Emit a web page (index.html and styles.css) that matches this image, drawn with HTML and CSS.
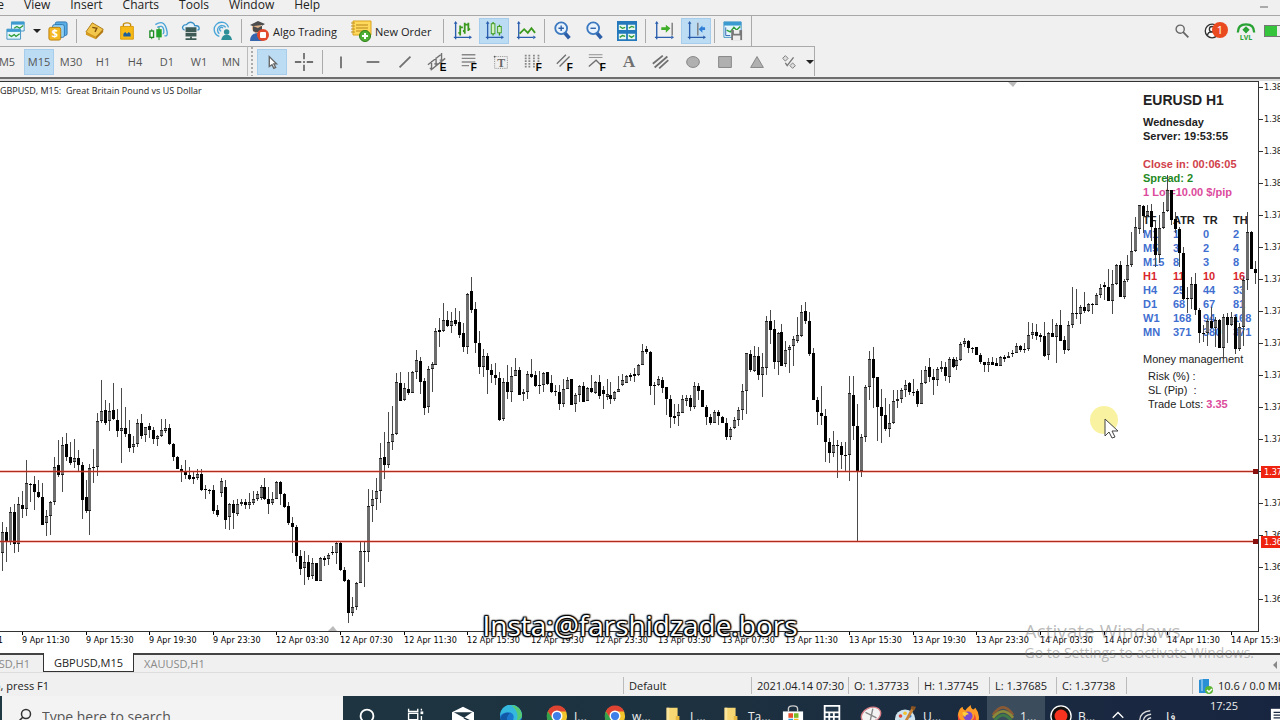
FILE: index.html
```html
<!DOCTYPE html>
<html lang="en">
  <head>
    <meta charset="utf-8">
    <title>GBPUSD,M15</title>
    <link rel="stylesheet" href="styles.css">
  </head>
  <body>
    <nav class="menu">
      <button>File</button>
      <button>View</button>
      <button>Insert</button>
      <button>Charts</button>
      <button>Tools</button>
      <button>Window</button>
      <button>Help</button>
      <button class="minimize" aria-label="Minimize"></button>
    </nav>

    <div class="toolbar">
      <div class="tools tools-main">
        <button class="tool" aria-label="New chart">
          <svg viewBox="0 0 22 22"><path d="M6 1h14v10H6z" fill="#e6f6fd" stroke="#3b8fc0"/><path d="M6 1h14v3H6z" fill="#3b9bd0"/><path d="M9 8l3-2 3 2 4-3" fill="none" stroke="#2f9d3a" stroke-width="1.5"/><path d="M1 9h15v11H1z" fill="#e6f6fd" stroke="#3b8fc0"/><path d="M1 9h15v3H1z" fill="#3b9bd0"/><path d="M3 15l3 2 3-2 2 2 4-3" fill="none" stroke="#2f9d3a" stroke-width="1.5"/></svg>
        </button>
        <i class="caret"></i>
        <button class="tool" aria-label="Market watch">
          <svg viewBox="0 0 22 22"><rect x="8" y="1" width="13" height="15" rx="2" fill="#5aaee6" stroke="#2a72ad"/><rect x="5" y="4" width="13" height="14" rx="2" fill="#8fd0f5" stroke="#2a72ad"/><rect x="1" y="7" width="13" height="14" rx="2" fill="#f4b824" stroke="#b87c08"/><text x="4" y="18" font-size="12" font-weight="bold" fill="#fff">$</text></svg>
        </button>
        <i class="sep"></i>
        <button class="tool" aria-label="Navigator">
          <svg viewBox="0 0 22 22"><path d="M1 12L8 2l12 7-8 10z" fill="#f3c64c" stroke="#a9760f"/><path d="M1 12l11 5v3L1 15z" fill="#d49a1f"/><path d="M12 17l8-8v3l-8 8z" fill="#b57b12"/><path d="M8 7l5 1-2 4" fill="none" stroke="#7d5208" stroke-width="1.5"/></svg>
        </button>
        <button class="tool" aria-label="Market">
          <svg viewBox="0 0 22 22"><path d="M7 7V4q0-2 4-2t4 2v3" fill="none" stroke="#c28b09" stroke-width="1.5"/><path d="M4 6h14v14H4z" fill="#f7b916" stroke="#d79a0a"/><path d="M7 17v-3l2-2 2 2 2-2 2 2v3z" fill="#1d5f9c"/></svg>
        </button>
        <button class="tool" aria-label="Signals">
          <svg viewBox="0 0 22 22"><path d="M3 9v11M11 6v15" stroke="#1e8a24"/><rect x="1" y="11" width="4" height="7" fill="#fff" stroke="#1e8a24" stroke-width="1.5"/><rect x="8" y="9" width="6" height="9" fill="#24a32c"/><path d="M7 4q9-6 12 4t-2 8M9 7q6-3 7 2t-1 5" fill="none" stroke="#4aa5d8" stroke-width="1.5"/></svg>
        </button>
        <button class="tool" aria-label="Virtual hosting">
          <svg viewBox="0 0 22 22"><path d="M4 10q-3-1-2-4 1-2 4-2 3-4 7-2 2 1 2 3 5 0 5 3 0 2-2 2" fill="#e3f3fb" stroke="#3a8fc4" stroke-width="1.5"/><path d="M5 7h12v5H5zM5 13h12v4H5z" fill="#3d5a55"/><path d="M11 17v3M5 20h12" stroke="#3d5a55" stroke-width="2"/></svg>
        </button>
        <button class="tool" aria-label="Community">
          <svg viewBox="0 0 22 22"><path d="M7 17A8 8 0 1 1 17 7M7 14a5 5 0 1 1 7-7M9 11a2 2 0 1 1 2-3" fill="none" stroke="#4aa5d8" stroke-width="1.5"/><circle cx="15" cy="12" r="3" fill="#2d8f97"/><path d="M9 21q1-6 6-6t6 6z" fill="#2d8f97"/></svg>
        </button>
        <i class="sep"></i>
        <button class="tool tool-text tool-algo">
          <svg viewBox="0 0 22 22"><circle cx="9" cy="8" r="5" fill="#e0b088"/><path d="M2 5l8-4 7 3-7 4zM5 6v5q4 3 9-1V5" fill="#4c4c4c"/><path d="M2 21q0-8 8-8l5 8z" fill="#3565ad"/><circle cx="15" cy="15" r="6" fill="#e2492c"/><rect x="12" y="12" width="6" height="6" rx="1" fill="#fff"/></svg>
          Algo Trading
        </button>
        <button class="tool tool-text tool-order">
          <svg viewBox="0 0 22 22"><path d="M3 1h18v14H3z" fill="#ffd95c" stroke="#d9a31c"/><path d="M6 5h12M6 8h12M6 11h12" stroke="#b8851a"/><path d="M1 3h4M1 6h4M1 9h4M1 12h4" stroke="#c2921f"/><circle cx="15" cy="16" r="5.500" fill="#4fae34" stroke="#2e8119"/><path d="M15 13v6M12 16h6" stroke="#fff" stroke-width="2"/></svg>
          New Order
        </button>
        <i class="sep"></i>
        <button class="tool" aria-label="Bar chart">
          <svg viewBox="0 0 22 22"><path d="M4 2v18M2 18h18" stroke="#2b5fae" stroke-width="1.500"/><path d="M4 0l2 3H2zM22 18l-3-2v4z" fill="#2b5fae"/><path d="M9 5v11M7 13h2M9 7h3M14 2v12M12 11h2M14 4h3M18 2v9M18 9h2" stroke="#3c9a1f" stroke-width="2"/></svg>
        </button>
        <button class="tool active" aria-label="Candlesticks">
          <svg viewBox="0 0 22 22"><path d="M4 2v18M2 18h18" stroke="#2b5fae" stroke-width="1.500"/><path d="M4 0l2 3H2zM22 18l-3-2v4z" fill="#2b5fae"/><path d="M10 1v15M17 4v12" stroke="#3c9a1f" stroke-width="1.500"/><rect x="8" y="3" width="4" height="11" fill="#d3f2c4" stroke="#3c9a1f"/><rect x="15" y="6" width="4" height="7" fill="#d3f2c4" stroke="#3c9a1f"/></svg>
        </button>
        <button class="tool" aria-label="Line chart">
          <svg viewBox="0 0 22 22"><path d="M3 2v18M1 18h18" stroke="#2b5fae" stroke-width="1.500"/><path d="M3 0l2 3H1zM22 18l-3-2v4z" fill="#2b5fae"/><path d="M4 14l5-5 4 4 4-5 4 5" fill="none" stroke="#3c9a1f" stroke-width="2"/></svg>
        </button>
        <i class="sep"></i>
        <button class="tool" aria-label="Zoom in">
          <svg viewBox="0 0 22 22"><path d="M12 12l6 7" stroke="#2d5fa8" stroke-width="4"/><circle cx="9" cy="8" r="6.500" fill="#e8f3fd" stroke="#3b78bf" stroke-width="2"/><path d="M9 5v6M6 8h6" stroke="#2d5fa8" stroke-width="1.500"/></svg>
        </button>
        <button class="tool" aria-label="Zoom out">
          <svg viewBox="0 0 22 22"><path d="M12 12l6 7" stroke="#2d5fa8" stroke-width="4"/><circle cx="9" cy="8" r="6.500" fill="#e8f3fd" stroke="#3b78bf" stroke-width="2"/><path d="M6 8h6" stroke="#2d5fa8" stroke-width="1.500"/></svg>
        </button>
        <button class="tool" aria-label="Tile windows">
          <svg viewBox="0 0 22 22"><rect x="0" y="0" width="22" height="22" fill="#2479bd"/><path d="M2 4h8v6H2zM12 4h8v6h-8zM2 14h8v6H2zM12 14h8v6h-8z" fill="#e8f8ef"/><path d="M3 6l3 2 3-1M13 8l3-2 3 1M3 18l3-2 3 1M13 16l3 2 3-2" fill="none" stroke="#2f9d3a" stroke-width="1.500"/></svg>
        </button>
        <i class="sep"></i>
        <button class="tool" aria-label="Auto scroll">
          <svg viewBox="0 0 22 22"><path d="M3 2v18M1 18h18" stroke="#2b5fae" stroke-width="1.500"/><path d="M3 0l2 3H1zM22 18l-3-2v4z" fill="#2b5fae"/><path d="M20 2v14" stroke="#777" stroke-width="1.500"/><path d="M8 7h5V4l5 4-5 5v-3H8z" fill="#3fae2a"/></svg>
        </button>
        <button class="tool active" aria-label="Chart shift">
          <svg viewBox="0 0 22 22"><path d="M4 2v18M2 18h18" stroke="#2b5fae" stroke-width="1.500"/><path d="M4 0l2 3H2zM22 18l-3-2v4z" fill="#2b5fae"/><path d="M13 2v14" stroke="#777" stroke-width="1.500"/><path d="M21 7h-3V5l-4 4 4 4v-3h3z" fill="#2f7fd6"/></svg>
        </button>
        <i class="sep"></i>
        <button class="tool" aria-label="Templates">
          <svg viewBox="0 0 22 22"><path d="M1 1h19v17H1z" fill="#e6f6fd" stroke="#3b8fc0"/><path d="M1 1h19v4H1z" fill="#3b9bd0"/><path d="M3 7v9h5" stroke="#2b5fae" fill="none"/><path d="M4 10l4 2 4-5 3 3 4-4" fill="none" stroke="#2f9d3a" stroke-width="1.500"/><path d="M9 10h12v11H9z" fill="#777"/><path d="M12 10h6v4h-6zM11 16h8v5h-8z" fill="#eee"/></svg>
        </button>
      </div>
      <div class="account">
        <button class="tool" aria-label="Search">
          <svg viewBox="0 0 22 22"><circle cx="9" cy="9" r="4.500" fill="none" stroke="#666" stroke-width="1.500"/><path d="M12 12l6 6" stroke="#666" stroke-width="2"/></svg>
        </button>
        <button class="tool profile" aria-label="Account">
          <svg viewBox="0 0 22 22"><circle cx="10" cy="11" r="7.500" fill="#fff" stroke="#333" stroke-width="1.500"/><circle cx="10" cy="9" r="3" fill="none" stroke="#333" stroke-width="1.500"/><path d="M5 16q0-4 5-4t5 4" fill="none" stroke="#333" stroke-width="1.500"/></svg>
          <span class="badge">1</span>
        </button>
        <button class="tool level" aria-label="Level">
          <svg viewBox="0 0 22 12"><path d="M2 11Q2 2 11 2t9 9" fill="none" stroke="#2aa335" stroke-width="2.500"/><path d="M11 4l4 4-4 4-4-4z" fill="#2aa335"/></svg>
          <span>LVL</span>
        </button>
        <i class="battery"></i>
      </div>
    </div>

    <div class="toolbar toolbar-draw">
      <div class="tools periods">
        <button class="tool">M5</button>
        <button class="tool active">M15</button>
        <button class="tool">M30</button>
        <button class="tool">H1</button>
        <button class="tool">H4</button>
        <button class="tool">D1</button>
        <button class="tool">W1</button>
        <button class="tool">MN</button>
      </div>
      <i class="grip"></i>
      <div class="tools tools-draw">
        <button class="tool active" aria-label="Cursor">
          <svg viewBox="0 0 22 22"><path d="M8 5v11l3-2 2 4 2-1-2-4h3z" fill="#fff" stroke="#666" stroke-width="1.500"/></svg>
        </button>
        <button class="tool" aria-label="Crosshair">
          <svg viewBox="0 0 22 22"><path d="M11 1v7M11 14v7M1 11h7M14 11h7M11 10v2" stroke="#707070" stroke-width="2"/></svg>
        </button>
        <i class="sep"></i>
        <button class="tool" aria-label="Vertical line">
          <svg viewBox="0 0 22 22"><path d="M11 5v13" stroke="#707070" stroke-width="2"/></svg>
        </button>
        <button class="tool" aria-label="Horizontal line">
          <svg viewBox="0 0 22 22"><path d="M4 11h14" stroke="#707070" stroke-width="2"/></svg>
        </button>
        <button class="tool" aria-label="Trend line">
          <svg viewBox="0 0 22 22"><path d="M5 17L17 5" stroke="#707070" stroke-width="2"/></svg>
        </button>
        <button class="tool" aria-label="Equidistant channel">
          <svg viewBox="0 0 22 22"><path d="M1 14L15 3M4 20L20 7M5 10v9M3 18h2M10 6v10M8 13h4M16 1v11M14 9h4" stroke="#707070" stroke-width="1.500"/><text x="14" y="21" font-size="11" font-weight="bold">E</text></svg>
        </button>
        <button class="tool" aria-label="Fibonacci retracement">
          <svg viewBox="0 0 22 22"><path d="M3 3h15M3 7h15M3 11h15M3 15h8" stroke="#888" stroke-width="1.500"/><text x="13" y="21" font-size="11" font-weight="bold">F</text></svg>
        </button>
        <button class="tool" aria-label="Text label">
          <svg viewBox="0 0 22 22"><path d="M4 5h14v13H4z" fill="none" stroke="#888" stroke-dasharray="1 1"/><circle cx="4" cy="5" r="1" fill="#555"/><text class="serif" x="7" y="16" font-size="13" font-weight="bold" fill="#666">T</text></svg>
        </button>
        <button class="tool" aria-label="Fibonacci time zones">
          <svg viewBox="0 0 22 22"><path d="M3 3v14M7 3v14M12 3v14M17 3v8" stroke="#888" stroke-width="2" stroke-dasharray="2 1"/><text x="14" y="21" font-size="11" font-weight="bold">F</text></svg>
        </button>
        <button class="tool" aria-label="Fibonacci channel">
          <svg viewBox="0 0 22 22"><path d="M2 13L12 3M5 16L16 5" stroke="#707070" stroke-width="1.500"/><text x="13" y="21" font-size="11" font-weight="bold">F</text></svg>
        </button>
        <button class="tool" aria-label="Fibonacci expansion">
          <svg viewBox="0 0 22 22"><path d="M2 3h15M2 6h15" stroke="#888"/><path d="M2 16l8-7 6 6" fill="none" stroke="#707070" stroke-width="1.500"/><text x="14" y="21" font-size="11" font-weight="bold">F</text></svg>
        </button>
        <button class="tool" aria-label="Text">
          <svg viewBox="0 0 22 22"><text class="serif" x="4" y="17" font-size="19" font-weight="bold" fill="#707070">A</text></svg>
        </button>
        <button class="tool" aria-label="Parallel lines">
          <svg viewBox="0 0 22 22"><path d="M2 13L13 4M4 17L18 5M9 18l10-9" stroke="#707070" stroke-width="2"/></svg>
        </button>
        <button class="tool" aria-label="Ellipse">
          <svg viewBox="0 0 22 22"><ellipse cx="11" cy="11" rx="7" ry="6" fill="#b0b0b0" stroke="#808080"/></svg>
        </button>
        <button class="tool" aria-label="Rectangle">
          <svg viewBox="0 0 22 22"><path d="M4 5h14v12H4z" fill="#b0b0b0" stroke="#808080"/></svg>
        </button>
        <button class="tool" aria-label="Triangle">
          <svg viewBox="0 0 22 22"><path d="M11 5l7 12H4z" fill="#b0b0b0" stroke="#808080"/></svg>
        </button>
        <button class="tool" aria-label="Arrows">
          <svg viewBox="0 0 22 22"><path d="M7 4l3 3-3 3-3-3zM15 12l3 3-3 3-3-3z" fill="#ddd" stroke="#777"/><path d="M7 12l2 3 7-9" fill="none" stroke="#777" stroke-width="1.500"/></svg>
        </button>
        <i class="caret"></i>
      </div>
    </div>

    <main class="chart">
      <div class="plot">
        <p class="symbol">GBPUSD, M15:&nbsp; Great Britain Pound vs US Dollar</p>

        <section class="info">
          <h1>EURUSD H1</h1>
          <p>Wednesday<br>Server: 19:53:55</p>
          <p><span class="red">Close in: 00:06:05</span><br><span class="green">Spread: 2</span><br><span class="pink">1 Lot=10.00 $/pip</span></p>
          <table>
            <tr><th>TF</th><th>ATR</th><th>TR</th><th>TH</th></tr>
            <tr><td>M1</td><td>1</td><td>0</td><td>2</td></tr>
            <tr><td>M5</td><td>3</td><td>2</td><td>4</td></tr>
            <tr><td>M15</td><td>8</td><td>3</td><td>8</td></tr>
            <tr class="current"><td>H1</td><td>11</td><td>10</td><td>16</td></tr>
            <tr><td>H4</td><td>25</td><td>44</td><td>33</td></tr>
            <tr><td>D1</td><td>68</td><td>67</td><td>81</td></tr>
            <tr><td>W1</td><td>168</td><td>94</td><td>168</td></tr>
            <tr><td>MN</td><td>371</td><td>380</td><td>371</td></tr>
          </table>
          <div class="money">
            <h2>Money management</h2>
            <p>Risk (%) :<br>SL (Pip) &nbsp;:<br>Trade Lots: <b class="pink">3.35</b></p>
          </div>
        </section>

        <svg id="candles" class="candles"></svg>

        <svg class="pointer" viewBox="0 0 32 36"><circle cx="15" cy="15" r="14" fill="#f7f08a" fill-opacity="0.8"/><path d="M16 14v17l4-4 3 6 3-1-3-6h6z" fill="#fff" stroke="#444"/></svg>
      </div>

      <ol class="prices">
        <li>1.38</li><li>1.38</li><li>1.38</li><li>1.38</li>
        <li>1.37</li><li>1.37</li><li>1.37</li><li>1.37</li><li>1.37</li>
        <li>1.37</li><li>1.37</li><li>1.37</li><li>1.37</li><li>1.37</li>
        <li>1.36</li><li>1.36</li><li>1.36</li>
        <li class="tag tag-upper">1.37</li>
        <li class="tag tag-lower">1.36</li>
      </ol>

      <svg id="times" class="times"></svg>
      <p class="watermark">Insta:@farshidzade.bors</p>
    </main>

    <nav class="tabs">
      <a href="#">EURUSD,H1</a>
      <a href="#" class="selected">GBPUSD,M15</a>
      <a href="#">XAUUSD,H1</a>
      <i class="scroll-left"></i>
    </nav>

    <footer class="status">
      <span class="help">For Help, press F1</span>
      <span>Default</span>
      <span>2021.04.14 07:30</span>
      <span>O: 1.37733</span>
      <span>H: 1.37745</span>
      <span>L: 1.37685</span>
      <span>C: 1.37738</span>
      <span></span>
      <span class="traffic">
        <svg viewBox="0 0 16 16"><path d="M1 2l3-1h7v12l-2 2H1z" fill="#2b8fd6"/><path d="M4 1v12" stroke="#bfe3fa"/><circle cx="11" cy="12" r="4" fill="#5bb535"/><path d="M9 12l2 2 3-3" fill="none" stroke="#fff" stroke-width="1.500"/></svg>
        10.6 / 0.0 Mb
      </span>
    </footer>

    <div class="taskbar">
      <label class="search">
        <svg viewBox="0 0 16 16"><circle cx="10" cy="6" r="4.500" fill="none" stroke="#333" stroke-width="1.500"/><path d="M7 9l-5 5" stroke="#333" stroke-width="1.500"/></svg>
        <input type="text" placeholder="Type here to search" aria-label="Search">
      </label>
      <button class="app wide" aria-label="Cortana"><svg viewBox="0 0 24 24"><circle cx="12" cy="12" r="7" fill="none" stroke="#fff" stroke-width="2"/></svg></button>
      <button class="app wide" aria-label="Task view"><svg viewBox="0 0 24 24"><path d="M5 4v3h10V4M5 9h10v7H5zM5 21v-3h10v3M19 4v2M19 12v9" fill="none" stroke="#fff" stroke-width="1.500"/><path d="M18 7h3v3h-3z" fill="#fff"/></svg></button>
      <button class="app wide" aria-label="Mail"><svg viewBox="0 0 24 24"><path d="M0 8l12-6 12 6v14H0z" fill="#fff"/><path d="M2 8h20l-9 6z" fill="#1e3440"/><path d="M13 14l6 3" fill="none" stroke="#1e3440" stroke-width="1.500"/></svg></button>
      <button class="app wide" aria-label="Edge"><svg viewBox="0 0 24 24"><circle cx="12" cy="12" r="12" fill="#1b78cf"/><path d="M0 12A12 12 0 0 1 24 11q0 6-6 6-5 0-3-3 0-6-6-6-6 0-9 4z" fill="#35b8dd"/><path d="M12 0q11 1 12 11 0 5-6 6 4-9-6-17z" fill="#56ca73"/><path d="M1 13q4-6 10-4-5 3-3 8 1 5 6 6Q2 25 1 13z" fill="#1258a4"/></svg></button>
      <button class="app labelled first"><svg viewBox="0 0 24 24"><use href="#chrome"/></svg>I...</button>
      <button class="app labelled"><svg viewBox="0 0 24 24"><use href="#chrome"/></svg>w...</button>
      <button class="app labelled"><svg viewBox="0 0 24 24"><use href="#folder"/></svg>L...</button>
      <button class="app labelled"><svg viewBox="0 0 24 24"><use href="#folder"/></svg>Ta...</button>
      <button class="app" aria-label="Store"><svg viewBox="0 0 24 24"><path d="M7 7V4q0-3 5-3t5 3v3" fill="none" stroke="#ccc" stroke-width="1.500"/><path d="M1 7h22v16H1z" fill="#fff"/><path d="M7 9h5v5H7z" fill="#e8502d"/><path d="M13 9h5v5h-5z" fill="#7dba28"/><path d="M7 15h5v5H7z" fill="#2b9be0"/><path d="M13 15h5v5h-5z" fill="#f9b91e"/></svg></button>
      <button class="app" aria-label="Calculator"><svg viewBox="0 0 24 24"><path d="M3 0h18v24H3z" fill="#fff"/><path d="M5 2h14v5H5zM5 9h3v3H5zM10 9h3v3h-3zM15 9h4v3h-4zM5 14h3v3H5zM10 14h3v3h-3zM15 14h4v3h-4z" fill="#22384a"/></svg></button>
      <button class="app" aria-label="Snipping tool"><svg viewBox="0 0 24 24"><ellipse cx="12" cy="11" rx="11" ry="8" fill="#f3f3f3" stroke="#d98088" stroke-width="1.500" transform="rotate(-25 12 11)"/><path d="M6 8l12 6M14 4l-3 14" stroke="#888" stroke-width="1.500"/><path d="M3 19q8 3 15-2" fill="none" stroke="#d0303b" stroke-width="3"/></svg></button>
      <button class="app labelled"><svg viewBox="0 0 24 24"><ellipse cx="11" cy="15" rx="11" ry="10" fill="#cfe3ee"/><circle cx="6" cy="12" r="2" fill="#df4b3a"/><circle cx="11" cy="9" r="2" fill="#f2c12e"/><circle cx="5" cy="18" r="2" fill="#3aa655"/><circle cx="16" cy="12" r="2" fill="#3478c9"/><path d="M11 19L20 3" stroke="#c98438" stroke-width="3"/><path d="M18 1l5 1-2 4-4-2z" fill="#8a5423"/></svg>U...</button>
      <button class="app" aria-label="Firefox"><svg viewBox="0 0 24 24"><path d="M1 12q0-7 5-10 0 3 3 4 2-3 6-6 0 4 3 5l2-2q4 5 4 10 0 11-11 11T1 12z" fill="#ff9b26"/><path d="M1 10q2 10 12 8 7-2 6-9 6 15-8 15Q0 22 1 10z" fill="#f0473a"/><circle cx="12" cy="12" r="5" fill="#7c4ad0"/><path d="M6 8q5-1 7 2-4 0-4 3-3-1-3-5z" fill="#ffd03b"/></svg></button>
      <button class="app labelled current"><svg viewBox="0 0 24 24"><path d="M1 11q11-17 22 0" fill="none" stroke="#8a5a35" stroke-width="3"/><path d="M1 14q11-14 22 0" fill="none" stroke="#8a8a3a" stroke-width="3"/><path d="M3 17q9-12 18 0" fill="none" stroke="#3f7a48" stroke-width="3"/></svg>1...</button>
      <button class="app labelled"><svg viewBox="0 0 24 24"><circle cx="12" cy="12" r="11" fill="#111" stroke="#fff" stroke-width="1.500"/><circle cx="12" cy="12" r="7" fill="#f5331f"/></svg>B...</button>
      <div class="tray">
        <button class="app" aria-label="Hidden icons"><svg viewBox="0 0 16 16"><path d="M2 10l6-6 6 6" fill="none" stroke="#fff" stroke-width="1.500"/></svg></button>
        <button class="app" aria-label="Network"><svg viewBox="0 0 16 16"><path d="M2 14Q2 3 14 2M6 15q0-8 9-9M10 15q0-4 5-5" fill="none" stroke="#ddd" stroke-width="1.500"/></svg></button>
        <span lang="fa">فا</span>
        <time>17:25</time>
        <button class="app notes" aria-label="Notifications"><svg viewBox="0 0 20 20"><path d="M1 2h18v16H1z" fill="#fff"/><path d="M4 6h12M4 9h12M4 12h12" stroke="#1b2a42" stroke-width="1.500"/></svg></button>
      </div>
    </div>

    <aside class="activate">
      <p class="activate-title">Activate Windows</p>
      <p>Go to Settings to activate Windows.</p>
    </aside>

    <svg class="defs" aria-hidden="true">
      <symbol id="chrome" viewBox="0 0 24 24"><circle cx="12" cy="12" r="11" fill="#f3c52d"/><path d="M2 7A11 11 0 0 1 22 7H12l-5 8z" fill="#df4432"/><path d="M2 7l6 9 6 1-3 6A11 11 0 0 1 2 7z" fill="#35a04c"/><circle cx="12" cy="12" r="6" fill="#fff"/><circle cx="12" cy="12" r="4.500" fill="#3f7fe8"/></symbol>
      <symbol id="folder" viewBox="0 0 24 24"><path d="M5 3h12v19H5z" fill="#f7d774"/><path d="M15 12h4v10h-4z" fill="#e9b93f"/><path d="M5 3h3v19H5z" fill="#fbe59c"/></symbol>
    </svg>

    <script src="chart.js"></script>
  </body>
</html>
```

FILE: styles.css
```css
* {
  box-sizing: border-box;
}

body {
  margin: 0;
  height: 100vh;
  display: flex;
  flex-direction: column;
  overflow: hidden;
  background: #f0f0f0;
  color: #222;
  font-family: "Open Sans", "Noto Sans", sans-serif;
  font-size: 11px;
}

button {
  margin: 0;
  padding: 0;
  border: none;
  background: none;
  color: inherit;
  font: inherit;
}

p, h1, h2, ol {
  margin: 0;
  padding: 0;
}

.defs {
  display: none;
}

/* menu */

.menu {
  display: flex;
  gap: 20px;
  height: 16px;
  padding-bottom: 5px;
  border-bottom: 1px solid #a8a8a8;
  font-size: 12px;
  line-height: 10px;
}

.menu button:first-child {
  margin-left: -15px;
}

.minimize {
  width: 8px;
  height: 2px;
  margin: 6px 12px 0 auto;
  background: #aaa;
}

/* toolbars */

.toolbar {
  display: flex;
  justify-content: space-between;
  height: 30px;
}

.toolbar-draw {
  justify-content: flex-start;
  height: 31px;
  padding-bottom: 1px;
}

.tools {
  display: flex;
  align-items: center;
  gap: 2px;
}

.tools-main {
  padding: 0 3px 0 1px;
  border-right: 1px solid #aaa;
}

.tool {
  flex: none;
  display: flex;
  align-items: center;
  justify-content: center;
  width: 30px;
  height: 26px;
}

.tool svg {
  width: 20px;
  height: 20px;
}

.tool.active {
  background: #bcdcf4;
  border: 1px solid #a6cdec;
}

.tool-text {
  width: auto;
  gap: 3px;
}

.tool-text svg {
  width: 22px;
  height: 22px;
}

.tool-algo {
  padding: 0 7px 0 3px;
}

.tool-order {
  padding: 0 9px 0 4px;
}

.sep {
  width: 1px;
  height: 24px;
  margin: 0 1px;
  background: #aaa;
}

.caret {
  border: 4px solid transparent;
  border-top-color: #222;
  border-bottom: none;
}

.account {
  display: flex;
  align-items: center;
  gap: 1px;
}

.profile {
  position: relative;
}

.badge {
  position: absolute;
  top: 4px;
  right: 0;
  width: 16px;
  height: 16px;
  border-radius: 50%;
  background: #ea4a20;
  color: #fff;
  line-height: 16px;
}

.level {
  flex-direction: column;
  width: 34px;
  color: #2aa335;
  font-size: 7px;
  font-weight: bold;
  line-height: 7px;
}

.level svg {
  height: 12px;
}

.battery {
  width: 16px;
  height: 12px;
  border: 1px solid #777;
  border-right: none;
  background: linear-gradient(90deg, #35c43c 12px, #eee 12px);
}

.periods {
  margin-left: -8px;
  padding-right: 1px;
  border-top: 1px solid #aaa;
  color: #555;
  font-size: 11px;
}

.grip {
  width: 10px;
  border-top: 1px solid #aaa;
  border-left: 1px solid #bbb;
  background: radial-gradient(circle at 3px 2px, #aaa 1px, transparent 1px) 1px 3px / 6px 4px repeat-y;
}

.tools-draw {
  border-top: 1px solid #aaa;
  border-right: 1px solid #aaa;
}

.tools-draw text {
  font-family: "Liberation Sans", sans-serif;
}

.tools-draw .serif {
  font-family: "Liberation Serif", serif;
}

/* chart */

.chart {
  flex: 1;
  position: relative;
  display: grid;
  grid-template-columns: 1fr 21px;
  grid-template-rows: 1fr 21px;
  min-height: 0;
  padding-top: 2px;
  border-top: 2px solid #6e6e6e;
  background: linear-gradient(#ddd 2px, #fff 2px);
  font-family: "DejaVu Sans Condensed", "DejaVu Sans", sans-serif;
  font-size: 9px;
}

.plot {
  position: relative;
  overflow: hidden;
  border: 1px solid #333;
  border-left: none;
}

.symbol {
  padding-top: 3px;
  font-family: "Open Sans", sans-serif;
  font-size: 9px;
  line-height: 12px;
}

.candles {
  position: absolute;
  top: 0;
  left: 0;
  width: 100%;
  height: 100%;
}

.candles .wick {
  fill: #4a4a4a;
}

.candles .up {
  fill: #6c6c6c;
}

.candles .edge {
  fill: #222;
}

.candles .level-line {
  fill: #b02c1c;
}

.candles .level-glow {
  fill: #e0402a;
  fill-opacity: 0.3;
}

.candles .level-mark {
  fill: #8a1010;
}

.candles .shift-mark {
  fill: #bbb;
}

.prices {
  position: relative;
  overflow: hidden;
  list-style: none;
}

.prices li {
  height: 32px;
  padding-left: 5px;
  background: linear-gradient(#333, #333) 0 6px / 4px 1px no-repeat;
  line-height: 13px;
}

.prices .tag {
  position: absolute;
  left: 2px;
  right: 0;
  height: 12px;
  padding-left: 3px;
  background: #ee2410;
  color: #fff;
  line-height: 12px;
}

.tag-upper {
  top: 385px;
}

.tag-lower {
  top: 455px;
}

.times {
  grid-column: 1 / -1;
  width: 100%;
  height: 21px;
}

.watermark {
  position: absolute;
  left: 0;
  right: 0;
  bottom: 9px;
  color: #fff;
  font-family: "Open Sans", sans-serif;
  font-size: 28px;
  line-height: 38px;
  text-align: center;
  text-shadow: 0 0 2px #000, 0 0 2px #000, 1px 1px 1px #000, -1px -1px 1px #000, 1px -1px 1px #000, -1px 1px 1px #000, 0 0 3px #000;
}

.pointer {
  position: absolute;
  top: 323px;
  right: 137px;
  width: 32px;
  height: 36px;
}

/* info panel over the chart */

.info {
  position: absolute;
  top: 10px;
  right: 0;
  width: 115px;
  font: bold 11px/14px "Liberation Sans", Arial, sans-serif;
}

.info h1 {
  margin-bottom: 7px;
  font-size: 14px;
  line-height: 16px;
}

.info p {
  margin-bottom: 14px;
  white-space: nowrap;
}

.info table {
  width: 120px;
  table-layout: fixed;
  border-collapse: collapse;
  color: #3f6fd0;
}

.info th,
.info td {
  height: 14px;
  padding: 0;
  text-align: left;
}

.info th {
  color: #222;
}

.info .current {
  color: #d8262c;
}

.money {
  margin-top: 13px;
}

.money h2,
.money p {
  font-size: 11px;
  font-weight: normal;
}

.money h2 {
  margin-bottom: 3px;
}

.money p {
  padding-left: 5px;
}

.red {
  color: #d0404a;
}

.green {
  color: #1f8a24;
}

.pink {
  color: #dc4a9c;
}

/* chart tabs */

.tabs {
  display: flex;
  height: 20px;
  padding-right: 3px;
  border-top: 2px solid #444;
  border-bottom: 1px solid #ddd;
  font-size: 11px;
  line-height: 17px;
}

.tabs a {
  padding: 0 10px;
  color: #8a8a8a;
  text-decoration: none;
}

.tabs a:first-child {
  width: 43px;
  direction: rtl;
  padding: 0 13px 0 0;
  overflow: hidden;
}

.tabs .selected {
  height: 19px;
  margin-top: -2px;
  border: 1px solid #333;
  border-top: none;
  background: #fff;
  color: #222;
  line-height: 20px;
}

.scroll-left {
  margin: 6px 0 0 auto;
  border: 4px solid transparent;
  border-right-color: #888;
  border-left: none;
  height: 8px;
}

/* status bar */

.status {
  display: grid;
  grid-template-columns: 1fr 128px 97px 70px 71px 67px 70px 66px 88px;
  height: 23px;
  padding: 4px 0 2px;
  line-height: 17px;
  white-space: nowrap;
}

.status span {
  padding-left: 5px;
  border-left: 1px solid #bbb;
  overflow: hidden;
}

.status .help {
  width: 49px;
  padding: 0;
  border: none;
  display: flex;
  justify-content: flex-end;
}

.traffic {
  display: flex;
  align-items: center;
  gap: 4px;
}

.traffic svg {
  flex: none;
  width: 16px;
  height: 16px;
}

/* taskbar, its lower half is below the screen edge */

.taskbar {
  display: flex;
  height: 24px;
  overflow: hidden;
  background: linear-gradient(90deg, #1f3842, #1d3240 50%, #182540);
  color: #eee;
  font-size: 12px;
}

.search {
  flex: none;
  display: flex;
  align-items: center;
  gap: 10px;
  width: 341px;
  height: 40px;
  margin-left: 2px;
  padding-left: 14px;
  background: #f3f3f3;
}

.search svg {
  width: 16px;
  height: 16px;
}

.search input {
  flex: 1;
  border: none;
  outline: none;
  padding: 0;
  background: none;
  font: 14px "Open Sans", sans-serif;
}

.search input::placeholder {
  color: #555;
}

.app {
  flex: none;
  display: flex;
  align-items: center;
  justify-content: center;
  width: 39px;
  height: 40px;
}

.app svg {
  flex: none;
  width: 22px;
  height: 22px;
}

.app.wide {
  width: 48px;
}

.app.labelled {
  justify-content: flex-start;
  gap: 6px;
  width: 58px;
  padding-left: 5px;
}

.app.first {
  margin-left: 6px;
}

.app.current {
  background: #3b4c5c;
}

.tray {
  flex: none;
  display: flex;
  align-items: center;
  height: 40px;
  margin-left: auto;
}

.tray .app {
  width: 27px;
}

.tray .app svg {
  width: 14px;
  height: 14px;
}

.tray span {
  width: 26px;
  text-align: center;
}

.tray time {
  align-self: flex-start;
  width: 80px;
  padding-top: 2px;
  text-align: center;
  font-size: 11px;
}

.tray .notes {
  width: 16px;
  padding-left: 6px;
  justify-content: flex-start;
}

.tray .notes svg {
  width: 18px;
  height: 18px;
}

.activate {
  position: absolute;
  right: 26px;
  bottom: 57px;
  color: rgba(120, 120, 120, 0.5);
  font-size: 14px;
  line-height: 20px;
}

.activate-title {
  font-size: 19px;
  line-height: 24px;
}
```

FILE: chart.js
```js
// Bars are [high, body top, body bottom, low, up], three points to a pixel
// below the top of their session.
const PITCH = 3.977
const FIRST_X = 2
const POINTS = 3
const LEVELS = [389, 459]

const sessions = [
  { top: 288, bars: [
    [455,485,550,602,1],[472,485,517,575,0],[411,425,517,525,1],[402,425,523,548,0],[381,403,523,545,1],
    [363,405,416,445,0],[271,339,416,438,1],[339,341,345,395,0],[318,341,366,420,0],[330,367,381,384,0],
    [338,380,464,464,0],[420,437,460,499,1],[392,395,437,494,1],[260,291,395,404,1],[210,284,314,322,0],
    [200,226,314,366,1],[188,221,262,272,0],[216,262,278,285,0],[207,265,276,293,1],[240,263,284,303,0],
    [276,284,390,446,0],[330,380,422,430,0],[281,293,422,494,1],[237,291,294,340,0],[129,153,291,318,1],
    [30,124,154,158,1],[90,121,160,164,0],[98,124,154,182,1],[39,121,148,150,0],[118,150,184,200,0],
    [54,175,184,280,1],[111,174,191,202,0],[150,191,234,246,0],[198,222,232,249,1],[147,158,223,232,1],
    [132,159,198,208,0],[170,172,195,216,1],[158,168,180,205,0],[171,180,206,222,0],[194,199,206,228,1],
    [147,180,199,202,1],[146,175,182,190,1],[162,174,222,224,0],[220,223,262,273,0],[258,261,296,298,0],
    [285,297,304,336,0],[269,306,314,328,0],[291,314,326,330,0],[306,322,326,342,0],[298,313,325,330,1],
    [298,313,359,362,0],[345,358,361,386,0],[356,359,363,371,0],[344,359,422,432,0],[404,420,434,440,0],
    [324,332,368,380,1],[329,352,450,476,0],[398,401,440,479,1],[390,401,430,476,0],[386,401,431,438,1],
    [388,396,402,408,1],[388,396,404,417,0],[370,395,404,417,1],[364,386,399,405,1],[363,371,386,392,1],
    [344,352,383,390,1],[323,352,387,390,0],[350,387,401,431,0],[366,386,398,404,1],[333,335,386,388,1],
    [333,336,371,404,0],[369,371,410,414,0],[396,407,458,466,0],[440,458,472,548,0],[465,472,557,575,0],
    [540,558,596,615,0]
  ] },
  { top: 178, bars: [
    [873,905,925,976,1],[885,905,950,960,0],[893,910,948,958,1],[908,908,964,964,0],[892,895,964,964,1],
    [888,895,899,919,0],[880,884,898,915,1],[858,877,880,884,0],[847,850,880,913,1],[842,850,931,933,0],
    [920,930,962,965,0],[958,961,1060,1090,0],[1010,1040,1060,1068,1],[967,970,1040,1050,1],[847,874,970,970,1],
    [847,872,876,982,0],[688,737,875,907,1],[691,716,737,785,1],[653,692,716,749,1],[548,594,692,728,1],
    [515,591,615,657,0],[456,546,614,625,1],[438,523,546,571,1],[340,367,522,524,1],[335,369,422,424,0],
    [368,385,421,422,1],[337,387,398,405,0],[332,337,398,398,1],[271,301,337,357,1],[290,302,365,402,0],
    [355,363,443,466,0],[317,328,440,458,1],[307,313,328,395,1],[203,212,314,316,1],[175,211,215,260,0],
    [130,179,214,217,1],[152,180,197,202,0],[157,184,197,218,1],[145,179,192,198,0],[153,187,224,233,0],
    [190,220,260,275,0],[98,101,260,281,1],[52,92,150,160,0],[127,148,250,278,0],[212,250,320,343,0],
    [268,287,322,352,1],[278,289,331,403,0],[313,330,345,368,0],[310,346,354,376,0],[336,354,479,482,0],
    [354,367,478,484,1],[316,367,397,417,0],[321,349,397,426,1],[295,331,347,349,1],[322,330,404,404,0],
    [386,395,403,424,1],[332,343,397,418,1],[298,343,350,354,0],[332,346,377,381,0],[334,375,378,403,0],
    [335,338,376,397,1],[336,337,373,376,0],[345,370,395,399,0],[376,394,397,409,0],[376,397,433,451,0],
    [358,386,433,440,1],[350,360,388,388,1],[357,358,436,436,0],[398,406,433,457,1],[375,379,406,427,1],
    [365,379,425,427,0],[380,384,424,424,1],[345,384,397,400,0],[364,367,398,402,1],[345,367,409,416,0]
  ] },
  { top: 198, bars: [
    [318,331,341,388,0],[297,343,352,360,1],[307,345,358,373,0],[332,336,358,364,1],[289,327,335,335,1],
    [283,300,314,317,1],[284,289,309,309,1],[280,286,290,304,0],[265,283,287,305,0],[252,256,286,288,1],
    [192,214,256,256,1],[198,208,215,223,0],[214,216,317,346,0],[307,315,318,374,0],[288,298,316,318,1],
    [292,300,323,340,0],[320,322,357,405,0],[345,357,412,444,0],[373,409,413,432,0],[373,397,409,437,1],
    [345,357,398,398,1],[345,355,362,378,1],[345,355,382,393,0],[306,319,382,387,1],[309,319,334,360,0],
    [331,331,382,382,0],[376,381,411,434,0],[402,411,430,435,0],[390,397,430,430,1],[390,397,409,434,0],
    [409,411,429,429,0],[414,430,471,480,0],[440,446,471,480,1],[411,421,445,448,1],[382,391,421,437,1],
    [312,334,391,421,1],[219,220,334,403,1],[211,221,270,277,0],[198,227,273,277,1],[202,227,285,300,0],
    [220,262,284,350,1],[109,124,264,286,1],[91,124,150,192,0],[121,148,247,266,0],[157,158,247,284,1],
    [133,157,257,257,0],[183,211,251,261,1],[194,202,211,278,1],[168,178,199,257,1],[111,166,182,190,1],
    [76,97,168,170,1],[67,94,124,133,0],[96,124,222,229,0],[203,220,361,361,0],[351,360,395,436,0],
    [318,398,409,436,0],[387,409,486,546,0],[474,486,519,549,0],[453,496,519,531,1],[481,496,499,594,0],
    [487,497,525,567,0],[487,524,528,573,0],[289,340,524,603,1],[289,346,439,481,0],[372,439,576,787,0],
    [463,472,574,592,1],[315,322,471,486,1],[214,238,321,361,1],[202,238,293,385,0],[291,291,382,484,0],
    [327,382,409,490,0],[353,404,448,454,0],[372,430,448,471,1],[331,364,430,433,1],[330,357,363,384,1],
    [325,331,357,370,1],[300,315,331,352,1],[305,309,337,344,0],[297,335,338,347,0]
  ] },
  { top: 88, bars: [
    [657,663,703,712,0],[601,640,703,703,1],[588,600,640,642,1],[564,592,622,635,0],[598,622,631,675,0],
    [590,598,631,648,1],[572,592,598,606,1],[575,592,619,632,0],[561,566,620,640,1],[561,566,590,595,0],
    [560,571,588,601,1],[516,523,571,573,1],[505,512,522,530,1],[510,514,535,548,0],[530,533,536,550,0],
    [531,531,555,555,0],[549,554,577,581,0],[577,577,584,605,0],[563,576,585,607,1],[560,577,585,585,0],
    [564,580,587,587,0],[558,562,587,587,1],[556,562,568,575,0],[545,557,565,565,1],[540,549,553,562,0],
    [518,528,550,550,1],[526,529,540,547,0],[520,536,540,550,0],[457,496,538,542,1],[460,487,495,506,1],
    [463,487,498,511,0],[488,496,502,515,0],[457,499,557,561,0],[486,490,556,571,1],[448,488,502,502,0],
    [460,466,502,580,1],[421,466,513,513,0],[499,511,541,553,0],[454,466,539,542,1],[352,430,466,474,1],
    [358,429,433,448,0],[406,411,433,462,1],[366,411,424,429,0],[400,403,424,426,1],[399,403,406,433,0],
    [370,375,405,405,1],[343,353,375,383,1],[337,346,352,389,0],[298,350,392,392,0],[301,342,392,432,1],
    [283,285,342,345,1],[273,285,381,381,0],[326,332,381,387,1],[256,285,331,335,1],[185,244,286,290,1],
    [142,172,243,245,1],[104,106,178,192,1],[104,107,139,190,0],[105,122,138,140,1],[102,124,172,212,0],
    [150,173,255,290,0],[135,173,255,278,1],[95,125,174,176,1],[15,60,124,126,1],[60,60,150,165,0],
    [127,148,178,190,0],[170,177,248,290,0],[232,248,386,390,0],[352,383,386,430,0],[322,342,386,417,1],
    [308,342,420,435,0],[415,420,489,518,0],[465,489,493,515,0],[446,452,490,527,1],[410,452,473,478,0],
    [440,450,473,530,1],[447,450,535,535,0],[433,440,535,565,1],[430,440,465,520,0],[427,442,465,467,1],
    [436,442,538,552,0],[460,470,538,543,1],[320,330,470,527,1],[126,186,329,360,1],[184,186,298,298,0],
    [272,298,310,342,0]
  ] }
]

const times = [
  '9 Apr 11:30', '9 Apr 15:30', '9 Apr 19:30', '9 Apr 23:30',
  '12 Apr 03:30', '12 Apr 07:30', '12 Apr 11:30', '12 Apr 15:30', '12 Apr 19:30', '12 Apr 23:30',
  '13 Apr 03:30', '13 Apr 07:30', '13 Apr 11:30', '13 Apr 15:30', '13 Apr 19:30', '13 Apr 23:30',
  '14 Apr 03:30', '14 Apr 07:30', '14 Apr 11:30', '14 Apr 15:30'
]

function add(parent, name, attributes, text) {
  const node = document.createElementNS('http://www.w3.org/2000/svg', name)
  for (const key in attributes) {
    node.setAttribute(key, attributes[key])
  }
  if (text) {
    node.textContent = text
  }
  parent.appendChild(node)
}

function drawCandles() {
  const svg = document.getElementById('candles')
  let index = 0
  sessions.forEach(({ top, bars }) => {
    bars.forEach(([high, open, close, low, up]) => {
      const x = Math.round(FIRST_X + index * PITCH)
      const y = value => Math.round(top + value / POINTS)
      const height = Math.max(y(close) - y(open), 1)
      add(svg, 'rect', { class: 'wick', x, y: y(high), width: 1, height: Math.max(y(low) - y(high), 1) })
      add(svg, 'rect', { class: up ? 'edge' : 'down', x: x - 1, y: y(open), width: 3, height: height })
      if (up && height > 2) {
        add(svg, 'rect', { class: 'up', x: x - 1, y: y(open) + 1, width: 3, height: height - 2 })
      }
      index++
    })
  })

  LEVELS.forEach(level => {
    add(svg, 'rect', { class: 'level-glow', x: 0, y: level - 1, width: '100%', height: 3 })
    add(svg, 'rect', { class: 'level-line', x: 0, y: level, width: '100%', height: 1 })
    add(svg, 'rect', { class: 'level-mark', x: svg.clientWidth - 5, y: level - 2, width: 5, height: 5 })
  })

  add(svg, 'path', { class: 'shift-mark', d: 'M1008 0h9l-4 5z' })
  add(svg, 'path', { class: 'shift-mark', d: 'M328 549h9l-4 -5z' })
}

function drawTimes() {
  const svg = document.getElementById('times')
  add(svg, 'text', { x: 3, y: 11, 'text-anchor': 'end' }, '9 Apr 2021')
  times.forEach((time, i) => {
    const x = Math.round(FIRST_X + (5 + i * 16) * PITCH)
    add(svg, 'rect', { x, y: 0, width: 1, height: 3 })
    add(svg, 'text', { x, y: 11 }, time)
  })
}

drawCandles()
drawTimes()
```
